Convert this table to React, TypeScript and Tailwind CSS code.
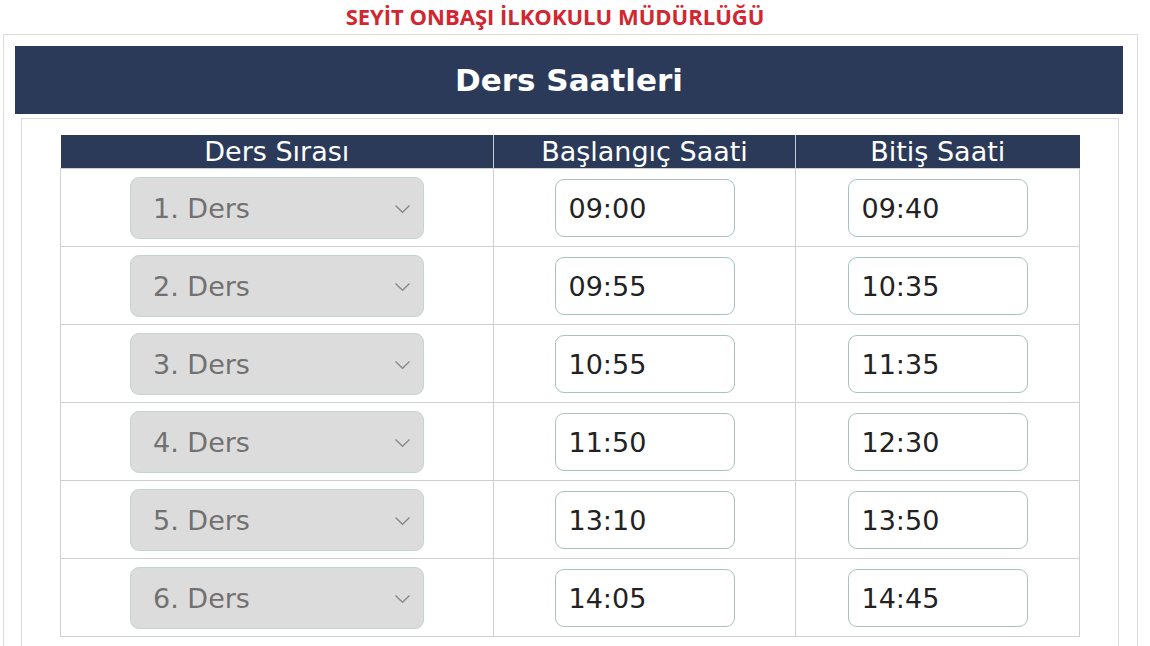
import React from "react"

const rows = [
  { no: "1. Ders", start: "09:00", end: "09:40" },
  { no: "2. Ders", start: "09:55", end: "10:35" },
  { no: "3. Ders", start: "10:55", end: "11:35" },
  { no: "4. Ders", start: "11:50", end: "12:30" },
  { no: "5. Ders", start: "13:10", end: "13:50" },
  { no: "6. Ders", start: "14:05", end: "14:45" },
]

const Chevron = () => (
  <svg width="17" height="10" viewBox="0 0 17 10" fill="none">
    <path d="M1.5 1.5 L8.5 8.3 L15.5 1.5" stroke="#8a8a8a" strokeWidth="1.4" />
  </svg>
)

const App = () => {
  return (
    <div className="w-[1150px] h-[646px] overflow-hidden bg-white font-['DejaVu_Sans',sans-serif]">
      {/* title */}
      <div className="w-[1110px] h-[34px] pt-[2px] text-center font-['Open_Sans',sans-serif] font-bold text-[22px] leading-[28px] text-[#d22630]">
        SEYİT ONBAŞI İLKOKULU MÜDÜRLÜĞÜ
      </div>

      {/* outer box */}
      <div className="ml-[3px] w-[1135px] h-[700px] border border-[#dcdcdc] pt-[11px] pl-[11px]">
        <div className="w-[1108px] h-[68px] bg-[#2c3a5a] flex items-center justify-center text-white font-bold text-[31px]">
          Ders Saatleri
        </div>

        {/* inner box */}
        <div className="mt-[4px] ml-[6px] w-[1098px] h-[600px] border border-[#dcdcdc] pt-[16px] pl-[38px]">
          <table className="w-[1019px] border-collapse table-fixed">
            <thead>
              <tr className="h-[33px] bg-[#2c3a5a] text-white text-[27px]">
                <th className="w-[433px] font-normal leading-[33px] border-r border-[#c9cdd6] p-0">Ders Sırası</th>
                <th className="w-[302px] font-normal leading-[33px] border-r border-[#c9cdd6] p-0">Başlangıç Saati</th>
                <th className="w-[284px] font-normal leading-[33px] p-0">Bitiş Saati</th>
              </tr>
            </thead>
            <tbody>
              {rows.map(r => (
                <tr key={r.no} className="h-[78px]">
                  <td className="border border-[#cfcfcf] p-0">
                    <div className="mx-auto w-[294px] h-[62px] rounded-[9px] bg-[#dcdcdc] border border-[#c6d3d3] flex items-center justify-between pt-[3px] pl-[22px] pr-[12px] text-[27px] text-[#717171]">
                      <span>{r.no}</span>
                      <Chevron />
                    </div>
                  </td>
                  <td className="border border-[#cfcfcf] p-0">
                    <div className="mx-auto w-[180px] h-[58px] rounded-[9px] border border-[#a9c1c1] bg-white flex items-center pt-[3px] pl-[13px] text-[27px] text-[#222]">
                      {r.start}
                    </div>
                  </td>
                  <td className="border border-[#cfcfcf] p-0">
                    <div className="mx-auto w-[180px] h-[58px] rounded-[9px] border border-[#a9c1c1] bg-white flex items-center pt-[3px] pl-[13px] text-[27px] text-[#222]">
                      {r.end}
                    </div>
                  </td>
                </tr>
              ))}
            </tbody>
          </table>
        </div>
      </div>
    </div>
  )
}

export default App
